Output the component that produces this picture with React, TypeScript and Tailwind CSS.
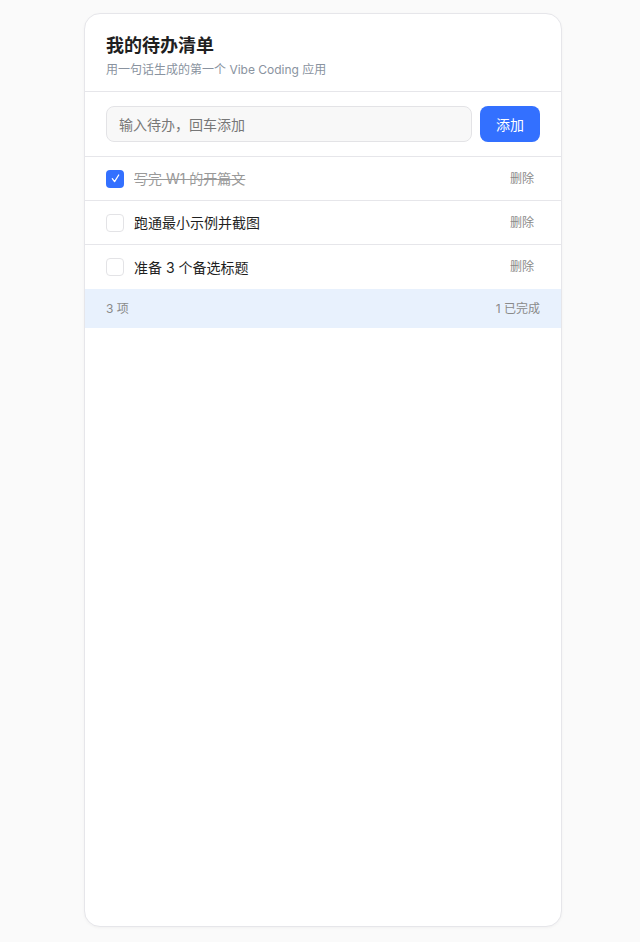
import { useState } from "react";

type Todo = { id: number; text: string; done: boolean };

const initial: Todo[] = [
  { id: 1, text: "写完 W1 的开篇文", done: true },
  { id: 2, text: "跑通最小示例并截图", done: false },
  { id: 3, text: "准备 3 个备选标题", done: false },
];

export default function App() {
  const [todos, setTodos] = useState<Todo[]>(initial);
  const [draft, setDraft] = useState("");

  const add = () => {
    const t = draft.trim();
    if (!t) return;
    setTodos([...todos, { id: Date.now(), text: t, done: false }]);
    setDraft("");
  };

  const doneCount = todos.filter((t) => t.done).length;

  return (
    <div
      className="min-h-[942px] bg-[#fafafa] pt-[13px] pb-[15px]"
      style={{ fontFamily: 'Inter, "Noto Sans CJK SC", sans-serif' }}
    >
      <div className="ml-[84px] w-[478px] h-[914px] bg-white rounded-2xl border border-[#e6e6ea] shadow-[0_1px_3px_rgba(0,0,0,0.04)] overflow-hidden">
        <header className="px-[21px] pt-[19px] pb-[12px] border-b border-[#e6e6ea]">
          <h1 className="text-[18px] leading-[26px] font-bold text-[#1f1f1f]">我的待办清单</h1>
          <p className="text-[12px] leading-[18px] mt-[2px] text-[#8a93a0]">用一句话生成的第一个 Vibe Coding 应用</p>
        </header>

        <div className="px-[21px] py-[14px] flex items-center gap-[8px] border-b border-[#e6e6ea]">
          <input
            value={draft}
            onChange={(e) => setDraft(e.target.value)}
            onKeyDown={(e) => e.key === "Enter" && add()}
            placeholder="输入待办，回车添加"
            className="flex-1 h-[36px] rounded-[8px] border border-[#e3e3e6] bg-[#f8f8f8] px-[12px] text-[14px] text-[#333] placeholder:text-[#777] outline-none"
          />
          <button
            onClick={add}
            className="w-[60px] h-[36px] rounded-[8px] bg-[#3370ff] text-white text-[14px]"
          >
            添加
          </button>
        </div>

        <ul>
          {todos.map((t, i) => (
            <li
              key={t.id}
              className={`h-[44px] px-[21px] flex items-center gap-[10px] ${
                i < todos.length - 1 ? "border-b border-[#e6e6ea]" : ""
              }`}
            >
              <button
                onClick={() => setTodos(todos.map((x) => (x.id === t.id ? { ...x, done: !x.done } : x)))}
                className={`w-[18px] h-[18px] shrink-0 rounded-[4px] grid place-items-center ${
                  t.done ? "bg-[#3370ff]" : "border border-[#e3e3e6] bg-white"
                }`}
              >
                {t.done && (
                  <svg viewBox="0 0 12 12" className="w-[11px] h-[11px]" fill="none" stroke="white" strokeWidth="1.4" strokeLinecap="round" strokeLinejoin="round">
                    <path d="M2.5 6.2 L5 9.4 L9.5 2.2" />
                  </svg>
                )}
              </button>
              <span className={`flex-1 text-[14px] ${t.done ? "line-through text-[#999]" : "text-[#1f1f1f]"}`}>
                {t.text}
              </span>
              <button
                onClick={() => setTodos(todos.filter((x) => x.id !== t.id))}
                className="text-[12px] text-[#8a8a8a] pr-[6px]"
              >
                删除
              </button>
            </li>
          ))}
        </ul>

        <div className="h-[39px] px-[21px] flex items-center justify-between bg-[#e8f1fd] text-[12px] text-[#8a8a8a]">
          <span>{todos.length} 项</span>
          <span>{doneCount} 已完成</span>
        </div>
      </div>
    </div>
  );
}
